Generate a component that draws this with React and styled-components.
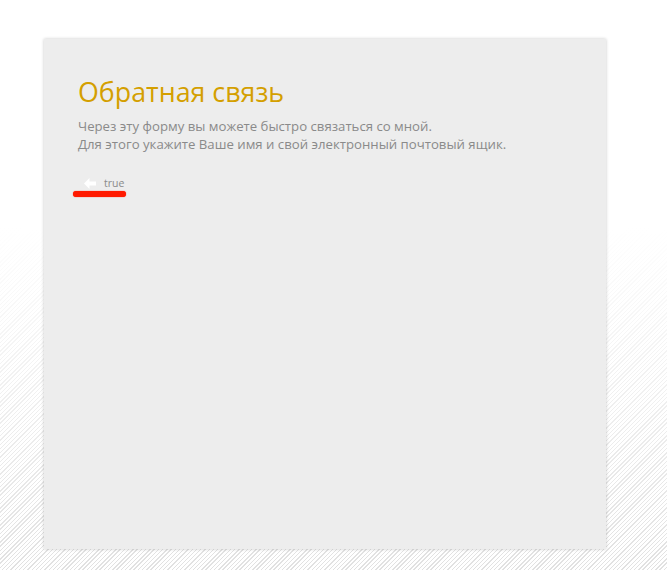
import React from 'react'
import styled, { createGlobalStyle } from 'styled-components'

const GlobalStyle = createGlobalStyle`
    html, body {
        margin: 0;
        height: 100%;
    }
    body {
        font-family: "Open Sans", "Liberation Sans", sans-serif;
        background:
            linear-gradient(to bottom, #fff 40%, rgba(255, 255, 255, 0.3) 100%),
            repeating-linear-gradient(135deg, #fff 0, #fff 2px, #d4d4d4 2px, #d4d4d4 3px);
        background-attachment: fixed;
    }
`

const Page = styled.div`
    padding: 39px 0 21px 44px;
`

const Panel = styled.div`
    width: 562px;
    height: 510px;
    box-sizing: border-box;
    background: #ededed;
    box-shadow: 0 0 3px rgba(0, 0, 0, 0.22);
    padding: 35px 34px;
`

const Title = styled.h1`
    margin: 0;
    font-weight: 400;
    font-size: 26.8px;
    line-height: 36px;
    color: #d49f00;
`

const Intro = styled.p`
    margin: 7px 0 0;
    font-size: 13.2px;
    line-height: 18px;
    color: #8a8a8a;
`

const BackWrap = styled.div`
    margin-top: 23px;
    display: inline-flex;
    flex-direction: column;
    margin-left: -5px;
`

const BackLink = styled.a`
    display: flex;
    align-items: center;
    gap: 8px;
    padding-left: 11px;
    font-size: 10.5px;
    line-height: 14px;
    color: #8a8a8a;
    text-decoration: none;
`

const Highlight = styled.span`
    display: block;
    width: 53px;
    height: 6px;
    margin-top: 1px;
    border-radius: 3px;
    background: #ff1a00;
    box-shadow: 0 0 1px #ff1a00;
`

function ArrowLeft() {
    return (
        <svg width="12" height="11" viewBox="0 0 12 11">
            <path d="M0 5.5 L5.5 0 L5.5 3.5 L12 3.5 L12 7.5 L5.5 7.5 L5.5 11 Z" fill="#fff" />
        </svg>
    )
}

export default function App() {
    return (
        <>
            <GlobalStyle />
            <Page>
                <Panel>
                    <Title>Обратная связь</Title>
                    <Intro>
                        Через эту форму вы можете быстро связаться со мной.
                        <br />
                        Для этого укажите Ваше имя и свой электронный почтовый ящик.
                    </Intro>
                    <BackWrap>
                        <BackLink href="#">
                            <ArrowLeft />
                            true
                        </BackLink>
                        <Highlight />
                    </BackWrap>
                </Panel>
            </Page>
        </>
    )
}
